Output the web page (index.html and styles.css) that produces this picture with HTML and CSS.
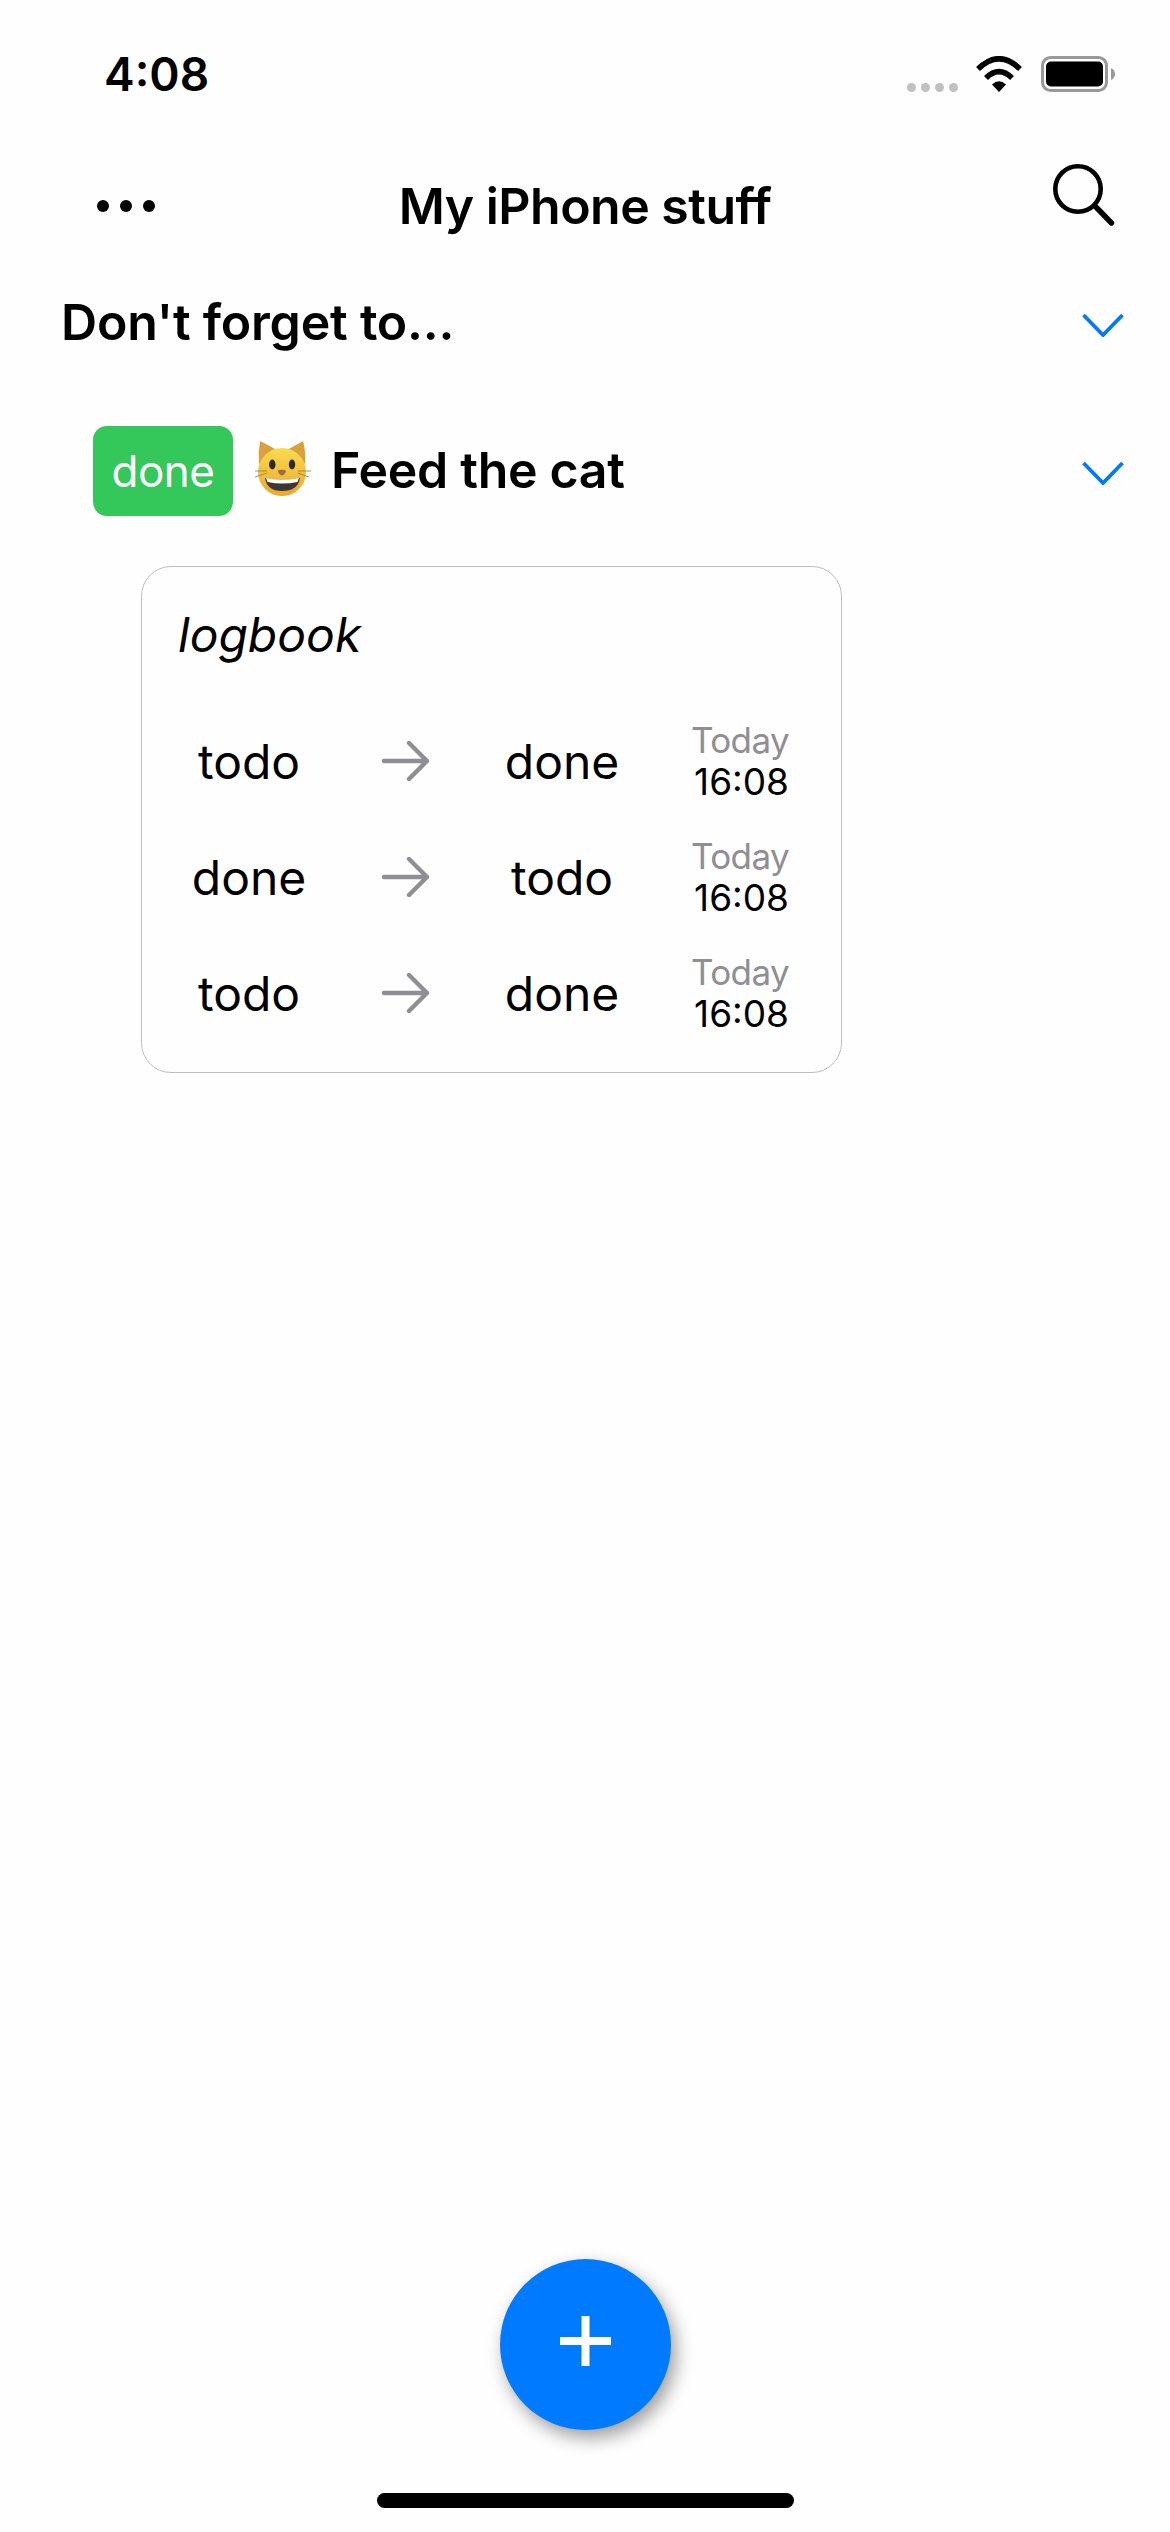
FILE: index.html
```html
<!DOCTYPE html>
<html lang="en">
<head>
    <meta charset="UTF-8">
    <meta name="viewport" content="width=device-width, initial-scale=1.0">
    <title>My iPhone stuff</title>
    <link rel="stylesheet" href="styles.css">
</head>
<body>
    <div class="screen">
        <div class="status-bar">
            <span class="clock">4:08</span>
            <div class="status-icons">
                <div class="signal-dots"><i></i><i></i><i></i><i></i></div>
                <svg class="wifi-icon" width="48" height="36" viewBox="0 0 48 36">
                    <path d="M24 36 L17 28.5 Q24 22 31 28.5 Z" fill="#000"/>
                    <path d="M11 22 Q24 9 37 22" fill="none" stroke="#000" stroke-width="5.5"/>
                    <path d="M3 13 Q24 -7.5 45 13" fill="none" stroke="#000" stroke-width="5.5"/>
                </svg>
                <svg class="battery-icon" width="74" height="36" viewBox="0 0 74 36">
                    <rect x="1.5" y="1.5" width="64" height="33" rx="8" fill="none" stroke="#999" stroke-width="3"/>
                    <rect x="5" y="5.5" width="57" height="25" rx="5" fill="#000"/>
                    <path d="M70 12 Q74 14 74 18 Q74 22 70 24 Z" fill="#999"/>
                </svg>
            </div>
        </div>

        <div class="nav-bar">
            <div class="more-dots"><i></i><i></i><i></i></div>
            <h1 class="nav-title">My iPhone stuff</h1>
            <svg class="search-icon" width="64" height="64" viewBox="0 0 64 64">
                <circle cx="25" cy="25" r="22.7" fill="none" stroke="#000" stroke-width="4.6"/>
                <path d="M42 42 L58.5 59" fill="none" stroke="#000" stroke-width="5.4" stroke-linecap="round"/>
            </svg>
        </div>

        <div class="section-row">
            <h2 class="section-title">Don't forget to...</h2>
            <svg class="chevron section-chevron" width="42" height="24" viewBox="0 0 42 24">
                <path d="M1.5 2 L21 22 L40.5 2" fill="none" stroke="#007aff" stroke-width="3.8"/>
            </svg>
        </div>

        <div class="task-row">
            <span class="status-badge">done</span>
            <svg class="cat-emoji" width="60" height="56" viewBox="0 0 60 56">
                <defs>
                    <linearGradient id="catFace" x1="0" y1="0" x2="0" y2="1">
                        <stop offset="0" stop-color="#fbdc50"/>
                        <stop offset="1" stop-color="#eea52a"/>
                    </linearGradient>
                </defs>
                <path d="M6 1 Q4 12 5 24 L23 10 Q14 5 6 1 Z" fill="#d9a03c"/>
                <path d="M49 1 Q52 12 51 24 L33 10 Q42 5 49 1 Z" fill="#d9a03c"/>
                <ellipse cx="28" cy="32" rx="24" ry="24" fill="url(#catFace)"/>
                <ellipse cx="18.3" cy="24.5" rx="3.2" ry="5" fill="#2d2a26"/>
                <ellipse cx="38" cy="24.5" rx="3.2" ry="5" fill="#2d2a26"/>
                <path d="M23.7 30.5 Q28 29 32 30.5 Q31 35 28 35.5 Q25 35 23.7 30.5 Z" fill="#9c6a45"/>
                <path d="M11 38 Q28 41 46 38 Q44 51 28 51 Q13 51 11 38 Z" fill="#3a3835"/>
                <path d="M12 38 Q28 41 45 38 L43.5 42 Q28 45 13.5 42 Z" fill="#fff"/>
                <path d="M1 37 L13 33 M1 31 L13 31 M55 37 L44 33 M57 31 L44 31" fill="none" stroke="#8d7a52" stroke-width="0.8"/>
            </svg>
            <span class="task-title">Feed the cat</span>
            <svg class="chevron task-chevron" width="42" height="24" viewBox="0 0 42 24">
                <path d="M1.5 2 L21 22 L40.5 2" fill="none" stroke="#007aff" stroke-width="3.8"/>
            </svg>
        </div>

        <div class="logbook-card">
            <div class="logbook-title">logbook</div>

            <div class="log-row">
                <span class="log-state">todo</span>
                <svg class="log-arrow" width="48" height="40" viewBox="0 0 48 40">
                    <path d="M3 20 L46 20 M28 2 L46 20 L28 38" fill="none" stroke="#8e8e93" stroke-width="4.4" stroke-linecap="round" stroke-linejoin="round"/>
                </svg>
                <span class="log-state">done</span>
                <div class="log-time">
                    <span class="log-day">Today</span>
                    <span class="log-clock">16:08</span>
                </div>
            </div>

            <div class="log-row">
                <span class="log-state">done</span>
                <svg class="log-arrow" width="48" height="40" viewBox="0 0 48 40">
                    <path d="M3 20 L46 20 M28 2 L46 20 L28 38" fill="none" stroke="#8e8e93" stroke-width="4.4" stroke-linecap="round" stroke-linejoin="round"/>
                </svg>
                <span class="log-state">todo</span>
                <div class="log-time">
                    <span class="log-day">Today</span>
                    <span class="log-clock">16:08</span>
                </div>
            </div>

            <div class="log-row">
                <span class="log-state">todo</span>
                <svg class="log-arrow" width="48" height="40" viewBox="0 0 48 40">
                    <path d="M3 20 L46 20 M28 2 L46 20 L28 38" fill="none" stroke="#8e8e93" stroke-width="4.4" stroke-linecap="round" stroke-linejoin="round"/>
                </svg>
                <span class="log-state">done</span>
                <div class="log-time">
                    <span class="log-day">Today</span>
                    <span class="log-clock">16:08</span>
                </div>
            </div>
        </div>

        <button class="add-button" type="button">
            <svg class="add-icon" width="51" height="50" viewBox="0 0 51 50">
                <path d="M25.5 0 V50 M0 25 H51" fill="none" stroke="#fff" stroke-width="8"/>
            </svg>
        </button>
        <div class="home-bar"></div>
    </div>
</body>
</html>
```

FILE: styles.css
```css
body {
    margin: 0;
    padding: 0;
    background-color: #fefefe;
    font-family: 'Inter', 'Liberation Sans', sans-serif;
    color: #000;
}

.screen {
    width: 1170px;
    height: 2532px;
    display: flex;
    flex-direction: column;
    overflow: hidden;
}

/* Status bar */
.status-bar {
    height: 148px;
    flex: none;
    display: flex;
    justify-content: space-between;
    align-items: center;
    padding: 0 55px 0 104px;
}

.clock {
    font-size: 46px;
    font-weight: 600;
}

.status-icons {
    display: flex;
    align-items: flex-end;
}

.signal-dots {
    display: flex;
    gap: 5px;
    margin-right: 17px;
}

.signal-dots i {
    width: 9px;
    height: 9px;
    border-radius: 50%;
    background-color: #c0c0c0;
}

.battery-icon {
    margin-left: 18px;
}

/* Nav bar */
.nav-bar {
    height: 116px;
    flex: none;
    display: grid;
    grid-template-columns: 1fr auto 1fr;
    align-items: center;
    padding: 0 53px;
}

.more-dots {
    display: flex;
    gap: 11px;
    margin-left: 44px;
}

.more-dots i {
    width: 12px;
    height: 12px;
    border-radius: 50%;
    background-color: #000;
}

.nav-title {
    margin: 0;
    font-size: 50px;
    font-weight: 600;
    letter-spacing: -0.5px;
}

.search-icon {
    justify-self: end;
    align-self: start;
    margin-top: 16px;
}

/* Section + task rows */
.section-row {
    height: 116px;
    flex: none;
    display: flex;
    justify-content: space-between;
    align-items: center;
    padding: 0 46px 0 61px;
}

.section-title {
    margin: 0;
    font-size: 50px;
    font-weight: 600;
    letter-spacing: -0.2px;
}

.section-chevron {
    margin-top: 6px;
}

.task-row {
    height: 90px;
    flex: none;
    margin-top: 46px;
    display: flex;
    align-items: center;
    padding: 0 46px 0 93px;
}

.status-badge {
    width: 140px;
    height: 90px;
    display: flex;
    justify-content: center;
    align-items: center;
    border-radius: 14px;
    background-color: #34c759;
    color: #fff;
    font-size: 44px;
    letter-spacing: -0.5px;
}

.cat-emoji {
    margin-left: 21px;
    margin-bottom: 6px;
}

.task-title {
    margin-left: 17px;
    margin-bottom: 3px;
    font-size: 50px;
    font-weight: 600;
    letter-spacing: -0.3px;
}

.task-chevron {
    margin-left: auto;
    margin-top: 3px;
}

/* Logbook card */
.logbook-card {
    width: 701px;
    height: 507px;
    flex: none;
    box-sizing: border-box;
    margin: 50px 0 0 141px;
    padding: 0 52px 0 36px;
    border: 1px solid #bdbdc2;
    border-radius: 30px;
}

.logbook-title {
    height: 136px;
    padding-top: 38px;
    box-sizing: border-box;
    font-size: 48px;
    line-height: 60px;
    font-style: italic;
}

.log-row {
    height: 116px;
    display: grid;
    grid-template-columns: 142px 170px 144px 1fr;
    align-items: center;
    justify-items: center;
}

.log-state {
    font-size: 48px;
}

.log-time {
    justify-self: end;
    display: flex;
    flex-direction: column;
    align-items: flex-end;
    line-height: 42px;
}

.log-day {
    font-size: 35px;
    letter-spacing: -0.6px;
    color: #8e8e93;
}

.log-clock {
    font-size: 37px;
}

/* Add button + home indicator */
.add-button {
    width: 171px;
    height: 171px;
    flex: none;
    margin: auto 0 0 500px;
    padding: 0 0 7px;
    display: flex;
    justify-content: center;
    align-items: center;
    border: none;
    border-radius: 50%;
    background-color: #007aff;
    box-shadow: 5px 8px 18px rgba(0, 0, 0, 0.38);
}

.home-bar {
    width: 417px;
    height: 15px;
    flex: none;
    margin: 63px 0 24px 377px;
    border-radius: 8px;
    background-color: #000;
}
```
